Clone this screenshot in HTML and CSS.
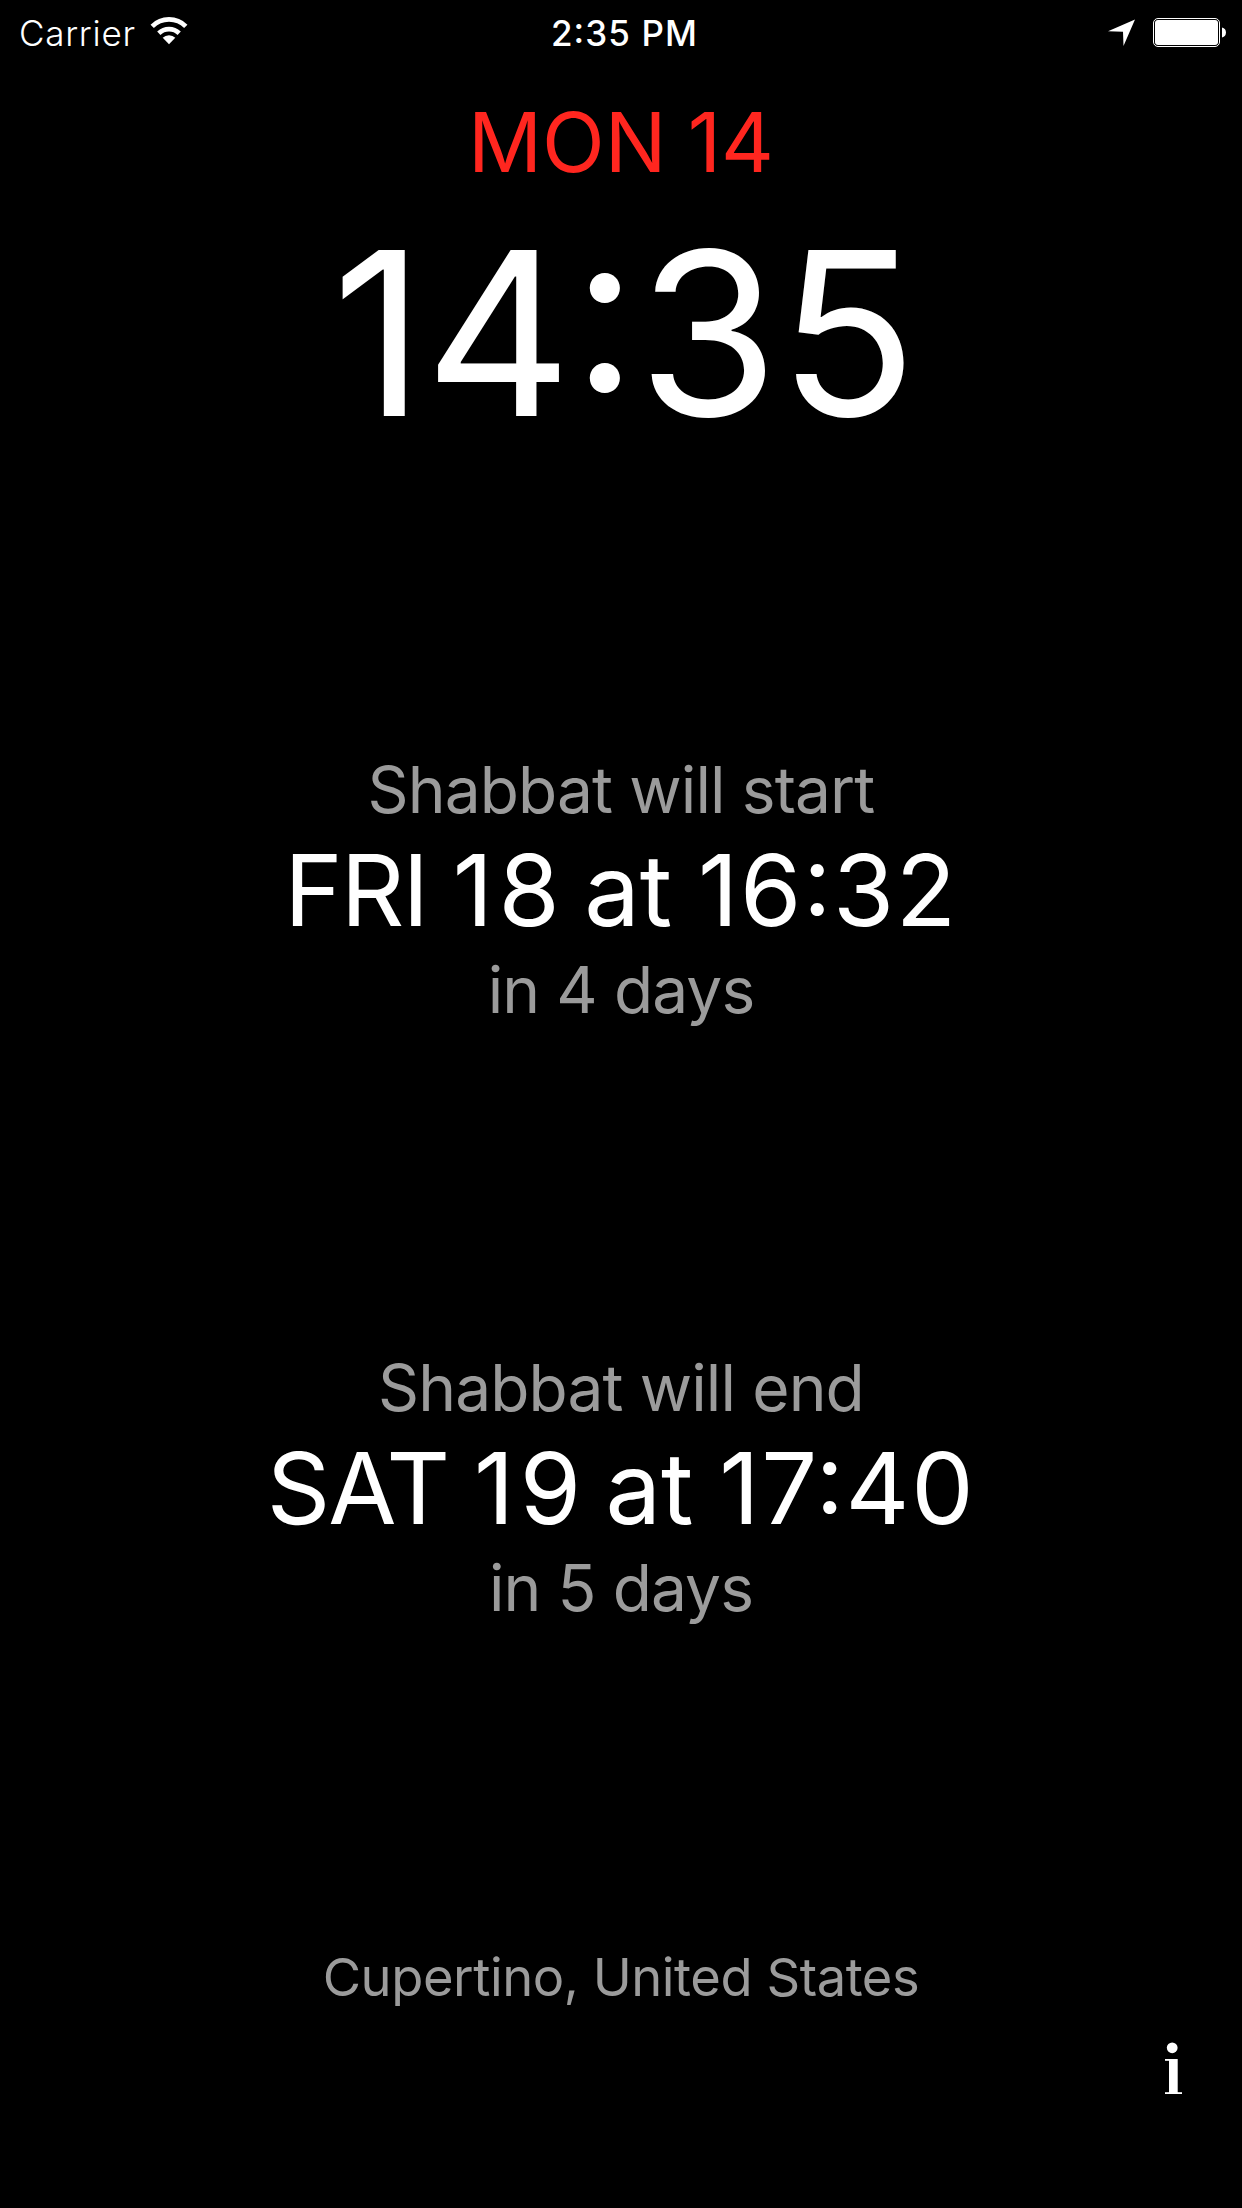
FILE: index.html
```
<!DOCTYPE html>
<html lang="en">
<head>
<meta charset="utf-8">
<title>Shabbat</title>
<link rel="stylesheet" href="styles.css">
</head>
<body>
<div class="screen">
  <header class="status">
    <div class="status-left">
      <span class="carrier">Carrier</span>
      <svg class="wifi" width="38" height="28" viewBox="0 0 38 28" aria-hidden="true">
        <g fill="none" stroke="#fff" stroke-width="4.7">
          <path d="M2.2 9.3 A23.8 23.8 0 0 1 35.8 9.3"/>
          <path d="M8.8 16.2 A14.8 14.8 0 0 1 29.2 16.2"/>
        </g>
        <path fill="#fff" d="M19 27.2 L12.7 20.8 A9 9 0 0 1 25.3 20.8 Z"/>
      </svg>
    </div>
    <span class="status-time">2:35 PM</span>
    <div class="status-right">
      <svg width="28" height="28" viewBox="0 0 28 28" aria-hidden="true">
        <path fill="#fff" d="M27 1.5 L15.5 28 L15 13.7 L0 13.3 Z"/>
      </svg>
      <svg width="74" height="29" viewBox="0 0 74 29" aria-hidden="true">
        <rect x=".5" y=".5" width="66" height="28" rx="4.5" fill="none" stroke="#fff"/>
        <rect x="2" y="2" width="63" height="25" rx="3" fill="#fff"/>
        <path fill="#fff" d="M69 9.5 C74.3 10.5 74.3 18.5 69 19.5 Z"/>
      </svg>
    </div>
  </header>
  <main class="main">
    <div class="date">MON 14</div>
    <div class="clock">14:35</div>
    <section class="event">
      <div class="label">Shabbat will start</div>
      <div class="moment"><span class="day">FRI</span> <span class="number">18</span> at <span class="hour">16:32</span></div>
      <div class="label">in 4 days</div>
    </section>
    <section class="event">
      <div class="label">Shabbat will end</div>
      <div class="moment"><span class="day">SAT</span> <span class="number">19</span> at <span class="hour">17:40</span></div>
      <div class="label">in 5 days</div>
    </section>
    <div class="place">Cupertino, United States</div>
  </main>
  <footer class="footer">
    <svg width="18" height="53" viewBox="0 0 18 53" role="img" aria-label="Info">
      <circle cx="7.2" cy="5.8" r="5.4" fill="#fff"/>
      <rect x="4" y="17" width="8.7" height="35" fill="#fff"/>
      <rect x="0" y="17" width="6" height="1.8" fill="#fff"/>
      <rect x="0" y="50.2" width="17" height="1.8" fill="#fff"/>
    </svg>
  </footer>
</div>
</body>
</html>
```
FILE: styles.css
```
* { box-sizing: border-box; }

body {
  margin: 0;
  background: #000;
  color: #fff;
  font-family: Inter, "Liberation Sans", sans-serif;
}

.screen {
  display: flex;
  flex-direction: column;
  height: 2208px;
  background: #000;
  white-space: nowrap;
}

.status {
  display: grid;
  grid-template-columns: 1fr auto 1fr;
  height: 66px;
  padding: 0 15px 0 19px;
  font-size: 35px;
  line-height: 66px;
}

.status-left,
.status-right {
  display: flex;
  align-items: flex-start;
}

.status-left { gap: 14px; }

.carrier {
  font-weight: 300;
  letter-spacing: .73px;
}

.wifi { margin-top: 17px; }

.status-time {
  padding-left: 3px;
  font-weight: 500;
  letter-spacing: 1.08px;
  font-feature-settings: "calt" 1;
}

.status-right {
  justify-content: flex-end;
  gap: 17px;
  padding-top: 18px;
}

.main {
  padding-top: 27px;
  text-align: center;
}

.date {
  color: #ff261f;
  font-size: 82px;
  line-height: 100px;
  word-spacing: -2px;
}

.clock {
  margin-top: 20px;
  padding-left: 7px;
  font-size: 228px;
  line-height: 240px;
}

.event {
  margin-top: 297px;
}

.event + .event { margin-top: 318px; }

.label {
  color: #9b9b9b;
  font-size: 64px;
  line-height: 80px;
  letter-spacing: -.88px;
}

.moment {
  margin: 5px 0;
  font-size: 99px;
  line-height: 110px;
  word-spacing: -2px;
}

.day { letter-spacing: -2px; }

.number {
  margin-right: -7px;
  letter-spacing: 5.5px;
}

.hour {
  letter-spacing: 1.6px;
  font-feature-settings: "calt" 1;
}

.place {
  margin-top: 317px;
  color: #9b9b9b;
  font-size: 52.5px;
  line-height: 64px;
  letter-spacing: -.46px;
}

.footer {
  display: flex;
  justify-content: flex-end;
  padding: 33px 59px 0 0;
}
```
